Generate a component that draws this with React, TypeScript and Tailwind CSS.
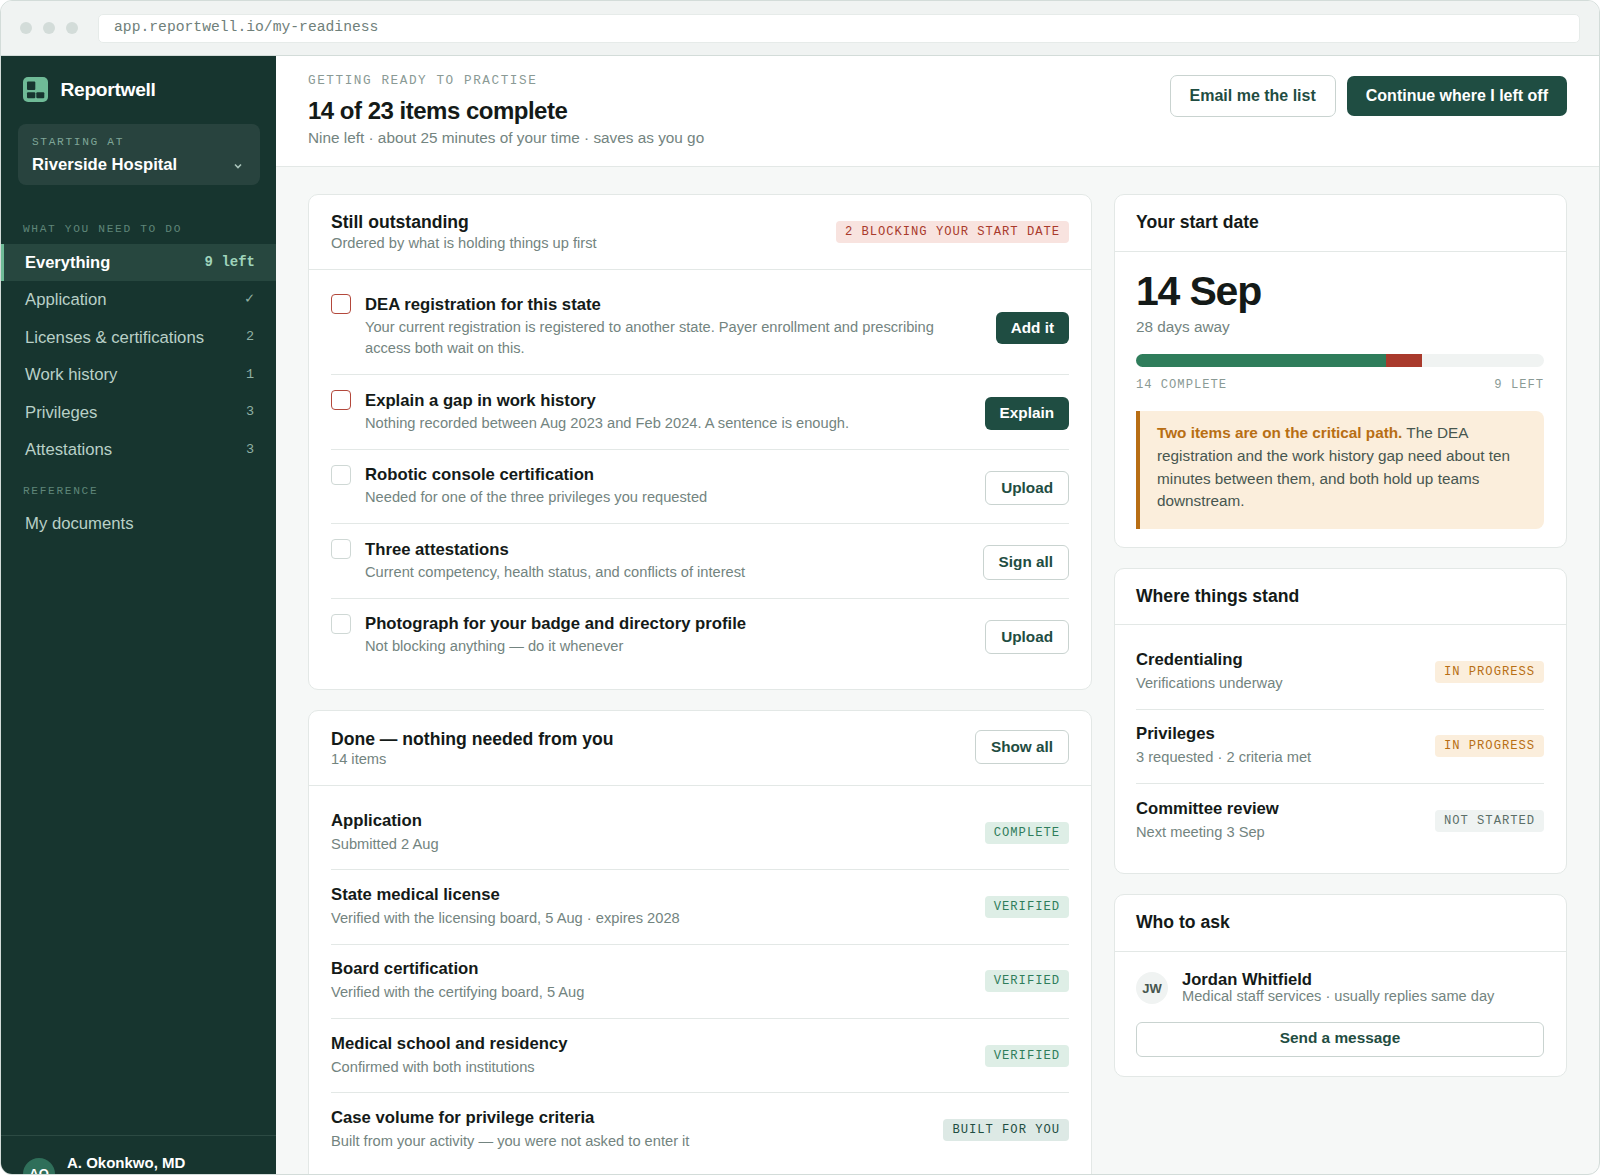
const sans = "font-['Liberation_Sans',Arial,sans-serif]";
const mono = "font-['Liberation_Mono','Courier_New',monospace]";

type Todo = { title: string; desc: string; action: string; primary?: boolean; urgent?: boolean };
type Tone = "amber" | "grey" | "green" | "slate";

const todos: Todo[] = [
  {
    title: "DEA registration for this state",
    desc: "Your current registration is registered to another state. Payer enrollment and prescribing access both wait on this.",
    action: "Add it",
    primary: true,
    urgent: true,
  },
  {
    title: "Explain a gap in work history",
    desc: "Nothing recorded between Aug 2023 and Feb 2024. A sentence is enough.",
    action: "Explain",
    primary: true,
    urgent: true,
  },
  { title: "Robotic console certification", desc: "Needed for one of the three privileges you requested", action: "Upload" },
  { title: "Three attestations", desc: "Current competency, health status, and conflicts of interest", action: "Sign all" },
  { title: "Photograph for your badge and directory profile", desc: "Not blocking anything — do it whenever", action: "Upload" },
];

const done = [
  { title: "Application", desc: "Submitted 2 Aug", tag: "COMPLETE", tone: "green" as Tone },
  { title: "State medical license", desc: "Verified with the licensing board, 5 Aug · expires 2028", tag: "VERIFIED", tone: "green" as Tone },
  { title: "Board certification", desc: "Verified with the certifying board, 5 Aug", tag: "VERIFIED", tone: "green" as Tone },
  { title: "Medical school and residency", desc: "Confirmed with both institutions", tag: "VERIFIED", tone: "green" as Tone },
  { title: "Case volume for privilege criteria", desc: "Built from your activity — you were not asked to enter it", tag: "BUILT FOR YOU", tone: "slate" as Tone },
];

const stand = [
  { title: "Credentialing", desc: "Verifications underway", tag: "IN PROGRESS", tone: "amber" as Tone },
  { title: "Privileges", desc: "3 requested · 2 criteria met", tag: "IN PROGRESS", tone: "amber" as Tone },
  { title: "Committee review", desc: "Next meeting 3 Sep", tag: "NOT STARTED", tone: "grey" as Tone },
];

const nav = [
  { label: "Application", count: "✓" },
  { label: "Licenses & certifications", count: "2" },
  { label: "Work history", count: "1" },
  { label: "Privileges", count: "3" },
  { label: "Attestations", count: "3" },
];

const Tag = ({ label, tone }: { label: string; tone: Tone }) => {
  const colors = {
    amber: "bg-[#fbeedc] text-[#b86e14]",
    grey: "bg-[#eff3f2] text-[#5c6f69]",
    green: "bg-[#deeee6] text-[#2f7d5b]",
    slate: "bg-[#dde9e5] text-[#1f4d42]",
  }[tone];
  return (
    <span className={`${mono} ${colors} shrink-0 rounded-[4px] px-[9px] py-[3px] text-[12.2px] leading-[16px] tracking-[0.96px]`}>
      {label}
    </span>
  );
};

const Button = ({ label, primary }: { label: string; primary?: boolean }) => (
  <button
    className={
      primary
        ? "shrink-0 rounded-[6px] bg-[#1f4d42] px-[15px] py-[7px] text-[15.3px] leading-[18.5px] font-bold text-white"
        : "shrink-0 rounded-[6px] border border-[#c9d3d0] bg-white px-[15px] py-[7px] text-[15.3px] leading-[18.5px] font-bold text-[#1f4d42]"
    }
  >
    {label}
  </button>
);

const Sidebar = () => (
  <aside className="flex w-[275px] shrink-0 flex-col overflow-hidden bg-[#17352f]">
    <div className="flex items-center gap-[12.5px] px-[22px] pt-[21px]">
      <svg width="25" height="25" viewBox="0 0 25 25">
        <rect width="25" height="25" rx="5" fill="#6fbb97" />
        <rect x="4" y="4.5" width="8.3" height="8.5" rx="1" fill="#17352f" />
        <rect x="4" y="15.3" width="8.3" height="6" rx="1" fill="#17352f" />
        <rect x="13.3" y="15.3" width="8" height="6" rx="1" fill="#17352f" />
      </svg>
      <span className="text-[19.2px] leading-[24px] font-bold tracking-[-0.3px] text-white">Reportwell</span>
    </div>
    <div className="mt-[22px] mr-[16px] ml-[17px] rounded-[8px] bg-[#28433e] pt-[11px] pr-[17px] pb-[9px] pl-[14px]">
      <div className={`${mono} text-[11.2px] leading-[14px] tracking-[1.66px] text-[#7fa698]`}>STARTING AT</div>
      <div className="mt-[4px] flex items-center justify-between">
        <span className="text-[16.65px] leading-[23px] font-bold text-white">Riverside Hospital</span>
        <svg width="10" height="10" viewBox="0 0 10 10" fill="none" stroke="#a9c4ba" strokeWidth="1.6" className="mt-[2px]">
          <path d="M2 3.5 5 6.5 8 3.5" />
        </svg>
      </div>
    </div>
    <div className={`${mono} mt-[37px] px-[22px] text-[11.2px] leading-[14px] tracking-[1.66px] text-[#5f8679]`}>WHAT YOU NEED TO DO</div>
    <div className="mt-[8px] flex h-[37px] shrink-0 items-center justify-between border-l-[3px] border-[#6fbb97] bg-[#27473f] pr-[21px] pl-[21px]">
      <span className="text-[16.5px] font-bold text-white">Everything</span>
      <span className={`${mono} text-[14px] font-bold text-[#9fd3bb]`}>9 left</span>
    </div>
    {nav.map((n) => (
      <div key={n.label} className="flex h-[37.5px] shrink-0 items-center justify-between pr-[22px] pl-[24px]">
        <span className="text-[16.7px] text-[#b9d0c7]">{n.label}</span>
        <span className={`${mono} ${n.count === "✓" ? "text-[15px]" : "text-[13.5px]"} text-[#8fb0a4]`}>{n.count}</span>
      </div>
    ))}
    <div className={`${mono} mt-[15px] px-[22px] text-[11.2px] leading-[14px] tracking-[1.66px] text-[#5f8679]`}>REFERENCE</div>
    <div className="mt-[8px] flex h-[37px] shrink-0 items-center pl-[24px]">
      <span className="text-[16.7px] text-[#b9d0c7]">My documents</span>
    </div>
    <div className="mt-auto flex h-[39px] shrink-0 gap-[12px] overflow-hidden border-t border-[#2c4a43] px-[22px]">
      <div className="mt-[22px] flex h-[32px] w-[32px] shrink-0 items-center justify-center rounded-full bg-[#2f6f5a] text-[13px] font-bold text-white">AO</div>
      <span className="mt-[17px] text-[15px] leading-[20px] font-bold text-white">A. Okonkwo, MD</span>
    </div>
  </aside>
);

const Header = () => (
  <header className="flex h-[111px] shrink-0 items-start justify-between border-b border-[#e3e8e6] bg-white px-[32px] pt-[17px]">
    <div>
      <div className={`${mono} text-[12.7px] leading-[16px] tracking-[1.56px] text-[#8a9a95]`}>GETTING READY TO PRACTISE</div>
      <h1 className="mt-[7px] text-[24px] leading-[30px] font-bold tracking-[-0.5px] text-[#141a18]">14 of 23 items complete</h1>
      <p className="mt-[1px] text-[15.33px] leading-[22px] text-[#738480]">Nine left · about 25 minutes of your time · saves as you go</p>
    </div>
    <div className="mt-[2px] flex items-center gap-[11px]">
      <button className="rounded-[7px] border border-[#c9d3d0] bg-white px-[19px] py-[10px] text-[16px] leading-[20px] font-bold text-[#1f4d42]">
        Email me the list
      </button>
      <button className="rounded-[7px] bg-[#1f4d42] px-[19px] py-[10px] text-[16px] leading-[20px] font-bold text-white">
        Continue where I left off
      </button>
    </div>
  </header>
);

const Card = ({ children }: { children: React.ReactNode }) => (
  <section className="overflow-hidden rounded-[10px] border border-[#e3e8e6] bg-white">{children}</section>
);

const CardTitle = ({ children }: { children: React.ReactNode }) => (
  <h2 className="text-[17.6px] leading-[22px] font-bold text-[#141a18]">{children}</h2>
);

const Row = ({ title, desc, tag, tone }: { title: string; desc: string; tag: string; tone: Tone }) => (
  <div className="flex h-[74.3px] items-center justify-between border-b border-[#e3e8e6] last:border-b-0">
    <div className="mb-[2px]">
      <div className="text-[16.7px] leading-[22px] font-bold text-[#141a18]">{title}</div>
      <div className="mt-[2px] text-[14.66px] leading-[20px] text-[#738480]">{desc}</div>
    </div>
    <Tag label={tag} tone={tone} />
  </div>
);

export default function App() {
  return (
    <div className={`${sans} h-[1176px] overflow-hidden bg-white`}>
      <div className="flex h-[1175px] flex-col overflow-hidden rounded-[12px] border border-[#d3dcd9] bg-[#f6f8f7]">
        <div className="flex h-[55px] shrink-0 items-center border-b border-[#d3dcd9] bg-[#f0f3f2] pr-[19px] pl-[19px]">
          <div className="flex gap-[11px]">
            <span className="h-[12px] w-[12px] rounded-full bg-[#d3dcd9]" />
            <span className="h-[12px] w-[12px] rounded-full bg-[#d3dcd9]" />
            <span className="h-[12px] w-[12px] rounded-full bg-[#d3dcd9]" />
          </div>
          <div className={`${mono} ml-[20px] flex h-[29px] flex-1 items-center rounded-[5px] border border-[#e6ebe9] bg-white px-[15px] pb-[2px] text-[14.7px] text-[#6f807a]`}>
            app.reportwell.io/my-readiness
          </div>
        </div>
        <div className="flex min-h-0 flex-1">
          <Sidebar />
          <main className="flex min-w-0 flex-1 flex-col overflow-hidden">
            <Header />
            <div className="grid grid-cols-[784px_1fr] items-start gap-[22px] px-[32px] pt-[27px]">
              <div className="flex flex-col gap-[20px]">
                <Card>
                  <div className="flex h-[75px] items-center justify-between border-b border-[#e3e8e6] pr-[22px] pl-[22px]">
                    <div className="mb-[1px]">
                      <CardTitle>Still outstanding</CardTitle>
                      <p className="text-[14.66px] leading-[20px] text-[#738480]">Ordered by what is holding things up first</p>
                    </div>
                    <span className={`${mono} rounded-[4px] bg-[#f8e3df] px-[9px] py-[3px] text-[12.2px] leading-[16px] tracking-[0.96px] text-[#a93a2c]`}>
                      2 BLOCKING YOUR START DATE
                    </span>
                  </div>
                  <div className="px-[22px] pt-[9px] pb-[17px]">
                    {todos.map((t) => (
                      <div key={t.title} className="flex items-center gap-[14px] border-b border-[#e3e8e6] py-[14.5px] last:border-b-0">
                        <span className={`mt-[0.5px] mb-auto h-[20px] w-[20px] shrink-0 rounded-[4px] border-[1.5px] bg-white ${t.urgent ? "border-[#b3483b]" : "border-[#cfd8d5]"}`} />
                        <div className="min-w-0 flex-1 pr-[45px]">
                          <div className="text-[16.7px] leading-[22px] font-bold text-[#141a18]">{t.title}</div>
                          <div className="mt-[1px] text-[14.66px] leading-[21.5px] text-[#738480]">{t.desc}</div>
                        </div>
                        <div className="mt-[3px] shrink-0">
                          <Button label={t.action} primary={t.primary} />
                        </div>
                      </div>
                    ))}
                  </div>
                </Card>
                <Card>
                  <div className="flex h-[75px] items-center justify-between border-b border-[#e3e8e6] px-[22px]">
                    <div className="mb-[1px]">
                      <CardTitle>Done — nothing needed from you</CardTitle>
                      <p className="text-[14.66px] leading-[18px] text-[#738480]">14 items</p>
                    </div>
                    <div className="mb-[2px]">
                      <Button label="Show all" />
                    </div>
                  </div>
                  <div className="px-[22px] pt-[10px] pb-[40px]">
                    {done.map((d) => (
                      <Row key={d.title} {...d} />
                    ))}
                  </div>
                </Card>
              </div>
              <div className="flex flex-col gap-[20px]">
                <Card>
                  <div className="flex h-[57px] items-center border-b border-[#e3e8e6] px-[21px] pb-[2px]">
                    <CardTitle>Your start date</CardTitle>
                  </div>
                  <div className="pt-[16px] pr-[22px] pb-[18px] pl-[21px]">
                    <div className="text-[41px] leading-[46px] font-bold tracking-[-1.2px] text-[#141a18]">14 Sep</div>
                    <div className="mt-[3px] text-[15.33px] leading-[20px] text-[#738480]">28 days away</div>
                    <div className="mt-[17px] flex h-[12.5px] overflow-hidden rounded-full bg-[#f0f3f2]">
                      <div className="w-[250px] bg-[#2f7d5b]" />
                      <div className="w-[36px] bg-[#a93a2c]" />
                    </div>
                    <div className={`${mono} mt-[10px] flex justify-between text-[12.2px] leading-[16px] tracking-[0.96px] text-[#8a9a95]`}>
                      <span>14 COMPLETE</span>
                      <span>9 LEFT</span>
                    </div>
                    <div className="mt-[18px] rounded-r-[8px] border-l-[4px] border-[#b86e14] bg-[#fbeedc] pt-[11.6px] pr-[16px] pb-[15.6px] pl-[17px] text-[15.3px] leading-[22.7px] text-[#47564f]">
                      <strong className="font-bold text-[#b86e14]">Two items are on the critical path.</strong> The DEA registration and the work history gap need about ten minutes between them, and both hold up teams downstream.
                    </div>
                  </div>
                </Card>
                <Card>
                  <div className="flex h-[56px] items-center border-b border-[#e3e8e6] px-[21px]">
                    <CardTitle>Where things stand</CardTitle>
                  </div>
                  <div className="pt-[11px] pr-[22px] pb-[15px] pl-[21px]">
                    {stand.map((s) => (
                      <Row key={s.title} {...s} />
                    ))}
                  </div>
                </Card>
                <Card>
                  <div className="flex h-[57px] items-center border-b border-[#e3e8e6] px-[21px] pb-[2px]">
                    <CardTitle>Who to ask</CardTitle>
                  </div>
                  <div className="pt-[19px] pr-[22px] pb-[19px] pl-[21px]">
                    <div className="flex items-center gap-[14px]">
                      <div className="flex h-[32px] w-[32px] items-center justify-center rounded-full bg-[#f0f3f2] text-[13px] font-bold text-[#47564f]">JW</div>
                      <div>
                        <div className="text-[16.6px] leading-[17px] font-bold text-[#141a18]">Jordan Whitfield</div>
                        <div className="text-[14.62px] leading-[17px] text-[#738480]">Medical staff services · usually replies same day</div>
                      </div>
                    </div>
                    <button className="mt-[17px] w-full rounded-[6px] border border-[#c9d3d0] bg-white pt-[5px] pb-[9px] text-[15.4px] leading-[19px] font-bold text-[#1f4d42]">
                      Send a message
                    </button>
                  </div>
                </Card>
              </div>
            </div>
          </main>
        </div>
      </div>
    </div>
  );
}
